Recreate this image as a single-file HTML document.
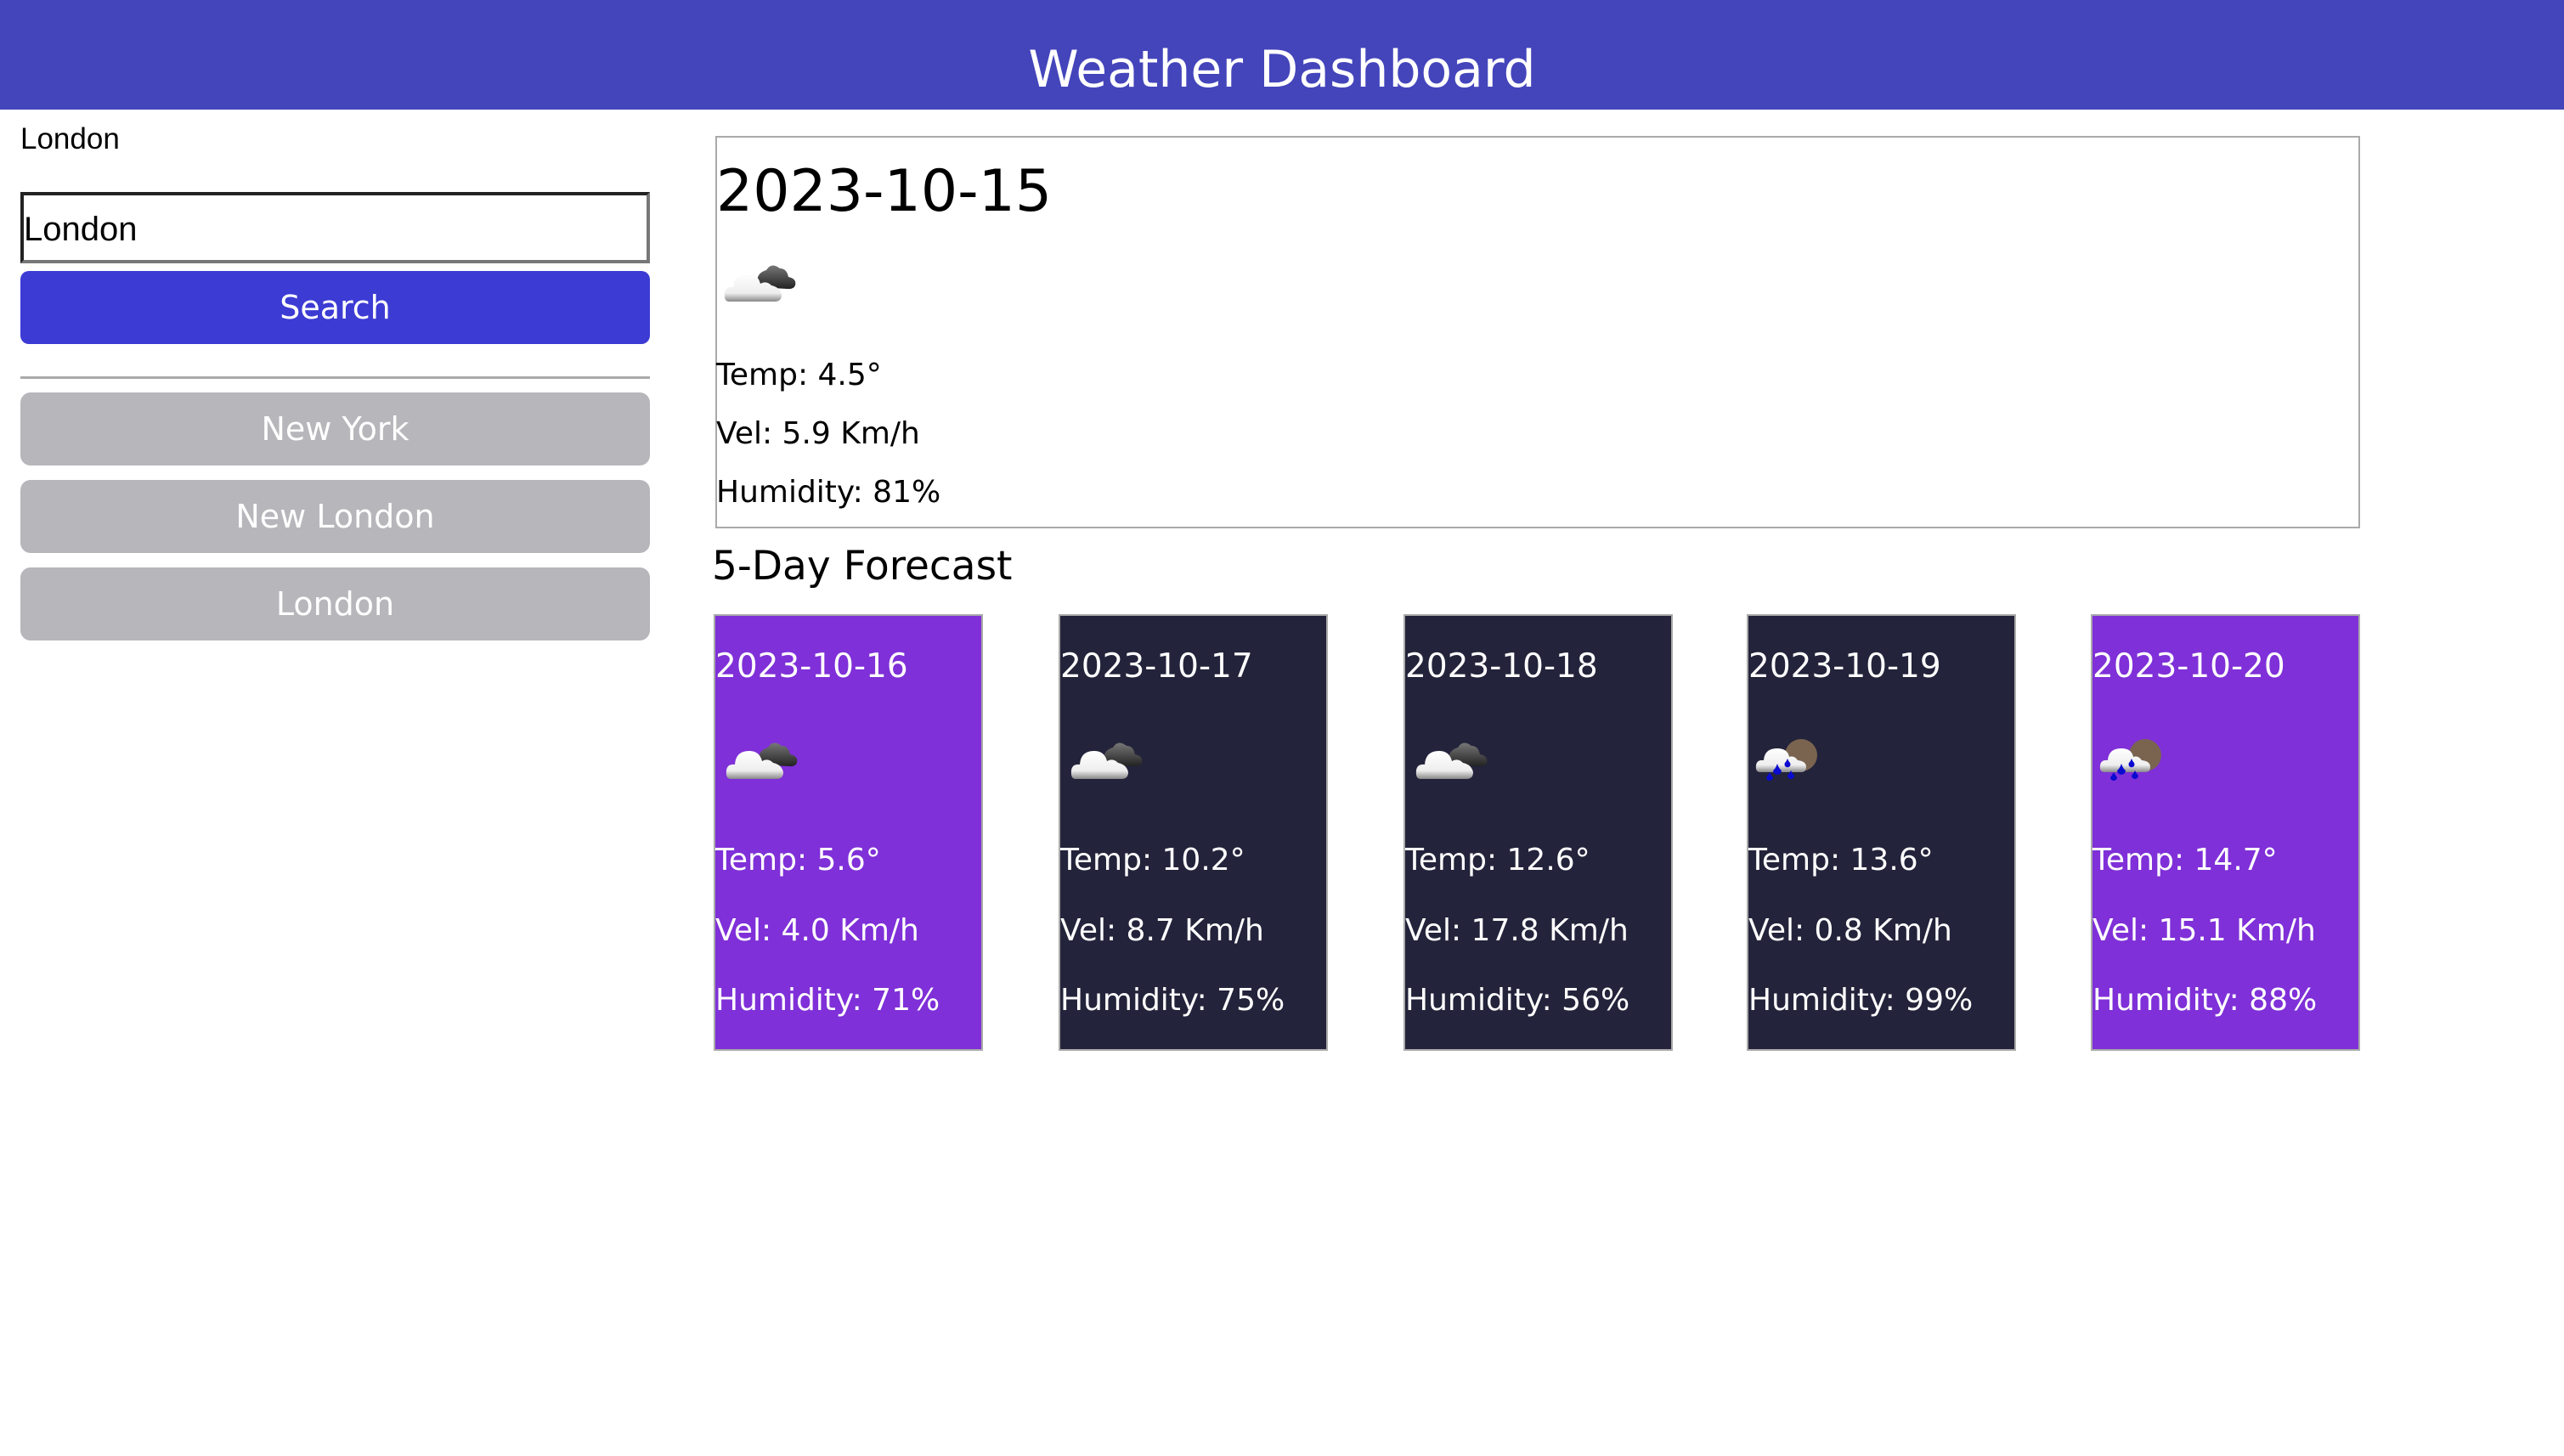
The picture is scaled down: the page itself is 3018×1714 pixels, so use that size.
<!DOCTYPE html>
<html><head><meta charset="utf-8"><style>
*{margin:0;padding:0;box-sizing:border-box}
body{width:3018px;height:1714px;background:#fff;position:relative;overflow:hidden;font-family:"DejaVu Sans",sans-serif}
.a{position:absolute;line-height:1;white-space:nowrap}
.hdr{position:absolute;left:0;top:0;width:3018px;height:129px;background:#4445bb}
.btn{position:absolute;left:24px;width:741px;height:86px;border-radius:12px;background:#b7b6bb;color:#fff;font-size:38px;text-align:center;line-height:86px}
.card{position:absolute;top:723px;width:317px;height:514px;border:2px solid #aaa}
.p{background:#7f30d8}.d{background:#23233b}
.card .a{color:#fff;left:0}
</style></head><body>
<div class="hdr"></div>
<div class="a" style="left:0;width:3018px;text-align:center;top:52px;font-size:60px;color:#fff">Weather Dashboard</div>

<div class="a" style="left:24px;top:146px;font-size:35px;font-family:'Liberation Sans',sans-serif;color:#000">London</div>
<div style="position:absolute;left:24px;top:226px;width:741px;height:84px;border:4px solid;border-color:#222 #777 #777 #222;background:#fff"></div>
<div class="a" style="left:28px;top:250px;font-size:40px;font-family:'Liberation Sans',sans-serif;color:#000">London</div>
<div class="btn" style="top:319px;background:#3c3bd4;border-radius:10px">Search</div>
<div style="position:absolute;left:24px;top:443px;width:741px;height:3px;background:#aaa"></div>
<div class="btn" style="top:462px">New York</div>
<div class="btn" style="top:565px">New London</div>
<div class="btn" style="top:668px">London</div>

<div style="position:absolute;left:842px;top:160px;width:1936px;height:462px;border:2px solid #aaa"></div>
<div class="a" style="left:843px;top:192px;font-size:68px;color:#000">2023-10-15</div>
<svg style="position:absolute;left:850px;top:300px" width="90" height="60" viewBox="0 0 90 60">
<defs><linearGradient id="w" x1="0" y1="0" x2="0" y2="1"><stop offset="0" stop-color="#fff"/><stop offset=".7" stop-color="#eee"/><stop offset="1" stop-color="#888"/></linearGradient>
<linearGradient id="k" x1="0" y1="0" x2="0" y2="1"><stop offset="0" stop-color="#777"/><stop offset="1" stop-color="#222"/></linearGradient></defs>
<path d="M42 38 Q38 22 52 18 Q58 8 68 16 Q76 16 78 26 Q88 28 86 36 Q84 41 76 40 Z" fill="url(#k)"/>
<path d="M8 55 Q2 55 3 45 Q4 37 13 38 Q14 22 30 22 Q42 22 45 34 Q52 30 58 36 Q68 38 70 47 Q70 55 62 55 Z" fill="url(#w)"/>
</svg>
<div class="a" style="left:843px;top:424px;font-size:36px">Temp: 4.5°</div>
<div class="a" style="left:843px;top:493px;font-size:36px">Vel: 5.9 Km/h</div>
<div class="a" style="left:843px;top:562px;font-size:36px">Humidity: 81%</div>

<div class="a" style="left:838px;top:643px;font-size:47px">5-Day Forecast</div>

<div class="card p" style="left:840px">
<div class="a" style="top:40px;font-size:39px">2023-10-16</div>
<svg style="position:absolute;left:10px;top:137px" width="90" height="60" viewBox="0 0 90 60"><path d="M42 38 Q38 22 52 18 Q58 8 68 16 Q76 16 78 26 Q88 28 86 36 Q84 41 76 40 Z" fill="url(#k)"/><path d="M8 55 Q2 55 3 45 Q4 37 13 38 Q14 22 30 22 Q42 22 45 34 Q52 30 58 36 Q68 38 70 47 Q70 55 62 55 Z" fill="url(#w)"/></svg>
<div class="a" style="top:270px;font-size:36px">Temp: 5.6°</div>
<div class="a" style="top:353px;font-size:36px">Vel: 4.0 Km/h</div>
<div class="a" style="top:435px;font-size:36px">Humidity: 71%</div>
</div>
<div class="card d" style="left:1246px">
<div class="a" style="top:40px;font-size:39px">2023-10-17</div>
<svg style="position:absolute;left:10px;top:137px" width="90" height="60" viewBox="0 0 90 60"><path d="M42 38 Q38 22 52 18 Q58 8 68 16 Q76 16 78 26 Q88 28 86 36 Q84 41 76 40 Z" fill="url(#k)"/><path d="M8 55 Q2 55 3 45 Q4 37 13 38 Q14 22 30 22 Q42 22 45 34 Q52 30 58 36 Q68 38 70 47 Q70 55 62 55 Z" fill="url(#w)"/></svg>
<div class="a" style="top:270px;font-size:36px">Temp: 10.2°</div>
<div class="a" style="top:353px;font-size:36px">Vel: 8.7 Km/h</div>
<div class="a" style="top:435px;font-size:36px">Humidity: 75%</div>
</div>
<div class="card d" style="left:1652px">
<div class="a" style="top:40px;font-size:39px">2023-10-18</div>
<svg style="position:absolute;left:10px;top:137px" width="90" height="60" viewBox="0 0 90 60"><path d="M42 38 Q38 22 52 18 Q58 8 68 16 Q76 16 78 26 Q88 28 86 36 Q84 41 76 40 Z" fill="url(#k)"/><path d="M8 55 Q2 55 3 45 Q4 37 13 38 Q14 22 30 22 Q42 22 45 34 Q52 30 58 36 Q68 38 70 47 Q70 55 62 55 Z" fill="url(#w)"/></svg>
<div class="a" style="top:270px;font-size:36px">Temp: 12.6°</div>
<div class="a" style="top:353px;font-size:36px">Vel: 17.8 Km/h</div>
<div class="a" style="top:435px;font-size:36px">Humidity: 56%</div>
</div>
<div class="card d" style="left:2056px">
<div class="a" style="top:40px;font-size:39px">2023-10-19</div>
<svg style="position:absolute;left:6px;top:140px" width="90" height="60" viewBox="0 0 90 60"><circle cx="56" cy="24" r="19" fill="#7a6450"/><path d="M8 44 Q2 44 3 36 Q4 29 12 30 Q13 16 28 16 Q40 16 42 26 Q48 24 52 30 Q62 31 62 38 Q62 44 56 44 Z" fill="url(#w)"/><path d="M28 34 Q30 40 33 42 A5 5 0 1 1 23 42 Q26 40 28 34Z M19 44 Q21 48 23 50 A4 4 0 1 1 15 50 Q17 48 19 44Z M44 42 Q46 46 48 48 A4 4 0 1 1 40 48 Q42 46 44 42Z M40 28 Q41 31 43 33 A3.5 3.5 0 1 1 37 33 Q39 31 40 28Z" fill="#0a0ad0"/></svg>
<div class="a" style="top:270px;font-size:36px">Temp: 13.6°</div>
<div class="a" style="top:353px;font-size:36px">Vel: 0.8 Km/h</div>
<div class="a" style="top:435px;font-size:36px">Humidity: 99%</div>
</div>
<div class="card p" style="left:2461px">
<div class="a" style="top:40px;font-size:39px">2023-10-20</div>
<svg style="position:absolute;left:6px;top:140px" width="90" height="60" viewBox="0 0 90 60"><circle cx="56" cy="24" r="19" fill="#7a6450"/><path d="M8 44 Q2 44 3 36 Q4 29 12 30 Q13 16 28 16 Q40 16 42 26 Q48 24 52 30 Q62 31 62 38 Q62 44 56 44 Z" fill="url(#w)"/><path d="M28 34 Q30 40 33 42 A5 5 0 1 1 23 42 Q26 40 28 34Z M19 44 Q21 48 23 50 A4 4 0 1 1 15 50 Q17 48 19 44Z M44 42 Q46 46 48 48 A4 4 0 1 1 40 48 Q42 46 44 42Z M40 28 Q41 31 43 33 A3.5 3.5 0 1 1 37 33 Q39 31 40 28Z" fill="#0a0ad0"/></svg>
<div class="a" style="top:270px;font-size:36px">Temp: 14.7°</div>
<div class="a" style="top:353px;font-size:36px">Vel: 15.1 Km/h</div>
<div class="a" style="top:435px;font-size:36px">Humidity: 88%</div>
</div>
</body></html>
